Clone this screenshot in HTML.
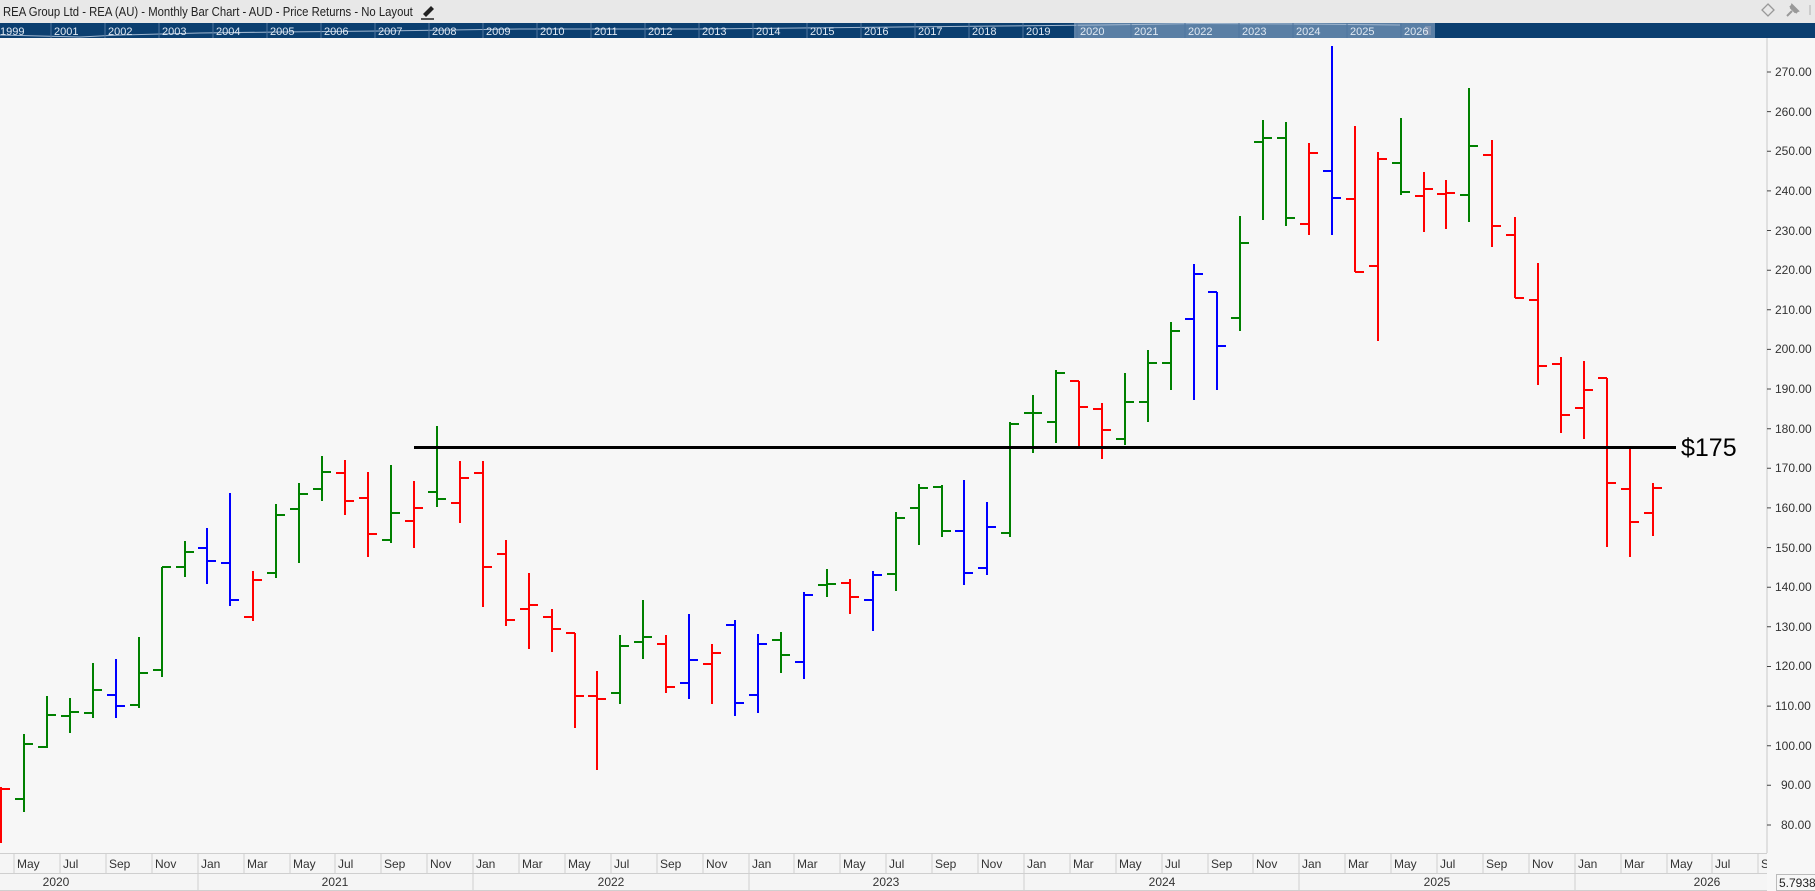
<!DOCTYPE html>
<html><head><meta charset="utf-8">
<style>
html,body{margin:0;padding:0;}
body{width:1815px;height:891px;overflow:hidden;background:#f7f7f7;font-family:"Liberation Sans",sans-serif;position:relative;}
#title{position:absolute;left:0;top:0;width:1815px;height:23px;background:#e8e8e8;}
#title span{position:absolute;left:3px;top:4px;font-size:13px;color:#222;transform:scaleX(0.87);transform-origin:0 0;white-space:nowrap;}
</style></head><body>
<div id="title"><span>REA Group Ltd - REA (AU) - Monthly Bar Chart - AUD - Price Returns - No Layout</span></div>
<svg style="position:absolute;left:0;top:0" width="1815" height="891" xmlns="http://www.w3.org/2000/svg">
<path d="M423 14 L431 6 L434 9 L426 17 Z" fill="#222"/><path d="M421 19 H434" stroke="#222" stroke-width="1.5"/>
<path d="M1768 4 L1774 10 L1768 16 L1762 10 Z" fill="none" stroke="#999" stroke-width="1.3"/>
<path d="M1787 16 L1792 11 M1790 6 L1797 13 M1792 5 L1798 11 L1795 12 L1791 8 Z" stroke="#999" stroke-width="2" fill="#999"/>
<path d="M1810 5 V15" stroke="#ccc" stroke-width="2"/>
<rect x="0" y="23" width="1815" height="15" fill="#0b3f70"/>
<rect x="1074" y="23" width="361" height="15" fill="#5a7fa5"/>
<polyline points="0,35 40,36 80,37 120,35 200,33 280,32 380,31 450,30 520,29 600,29 700,29 800,28 900,27 1000,26 1100,25 1200,23.5 1300,24 1400,25" fill="none" stroke="#9fb6cf" stroke-width="1"/>
<g stroke="#4f759e" stroke-width="1">
<path d="M51 23V38M105 23V38M159 23V38M213 23V38M267 23V38M321 23V38M375 23V38M429 23V38M483 23V38M537 23V38M591 23V38M645 23V38M699 23V38M753 23V38M807 23V38M861 23V38M915 23V38M969 23V38M1023 23V38M1077 23V38M1131 23V38M1185 23V38M1239 23V38M1293 23V38M1347 23V38M1401 23V38"/>
</g>
<path d="M1426 26V35M1428 26V35M1430 26V35" stroke="#aab" stroke-width="0.8"/>
<g font-size="11" fill="#dfe8f2" font-family="Liberation Sans, sans-serif">
<text x="0" y="35">1999</text><text x="54" y="35">2001</text><text x="108" y="35">2002</text><text x="162" y="35">2003</text><text x="216" y="35">2004</text><text x="270" y="35">2005</text><text x="324" y="35">2006</text><text x="378" y="35">2007</text><text x="432" y="35">2008</text><text x="486" y="35">2009</text><text x="540" y="35">2010</text><text x="594" y="35">2011</text><text x="648" y="35">2012</text><text x="702" y="35">2013</text><text x="756" y="35">2014</text><text x="810" y="35">2015</text><text x="864" y="35">2016</text><text x="918" y="35">2017</text><text x="972" y="35">2018</text><text x="1026" y="35">2019</text><text x="1080" y="35">2020</text><text x="1134" y="35">2021</text><text x="1188" y="35">2022</text><text x="1242" y="35">2023</text><text x="1296" y="35">2024</text><text x="1350" y="35">2025</text><text x="1404" y="35">2026</text>
</g>
<path d="M1767 38V853" stroke="#c8c8c8" stroke-width="1"/>
<g stroke="#444" stroke-width="1">
<path d="M1767 72H1771M1767 111.6H1771M1767 151.3H1771M1767 190.9H1771M1767 230.5H1771M1767 270.2H1771M1767 309.8H1771M1767 349.4H1771M1767 389H1771M1767 428.7H1771M1767 468.3H1771M1767 507.9H1771M1767 547.6H1771M1767 587.2H1771M1767 626.8H1771M1767 666.5H1771M1767 706.1H1771M1767 745.7H1771M1767 785.3H1771M1767 825H1771"/>
</g>
<g font-size="12" fill="#333" font-family="Liberation Sans, sans-serif">
<text x="1775" y="76">270.00</text><text x="1775" y="116">260.00</text><text x="1775" y="155">250.00</text><text x="1775" y="195">240.00</text><text x="1775" y="235">230.00</text><text x="1775" y="274">220.00</text><text x="1775" y="314">210.00</text><text x="1775" y="353">200.00</text><text x="1775" y="393">190.00</text><text x="1775" y="433">180.00</text><text x="1775" y="472">170.00</text><text x="1775" y="512">160.00</text><text x="1775" y="552">150.00</text><text x="1775" y="591">140.00</text><text x="1775" y="631">130.00</text><text x="1775" y="670">120.00</text><text x="1775" y="710">110.00</text><text x="1775" y="750">100.00</text><text x="1781" y="789">90.00</text><text x="1781" y="829">80.00</text>
</g>
<g fill="none" stroke-width="2">
<path stroke="#008000" d="M24 734V812M15 799H24M24 744H33M47 696V748M38 747H47M47 715H56M70 698V733M61 716H70M70 712H79M93 663V718M84 713H93M93 690H102M139 637V708M130 705H139M139 673H148M162 567V677M153 670H162M162 567H171M185 541V577M176 567H185M185 552H194M276 504V578M267 573H276M276 515H285M299 483V563M290 509H299M299 494H308M322 456V501M313 489H322M322 472H331M391 465V543M382 540H391M391 513H400M437 426V507M428 492H437M437 499H446M620 635V704M611 693H620M620 646H629M643 600V659M634 642H643M643 637H652M781 632V673M772 640H781M781 655H790M827 569V597M818 585H827M827 584H836M896 512V591M887 574H896M896 518H905M919 484V545M910 508H919M919 488H928M942 485V537M933 487H942M942 531H951M1010 422V537M1001 533H1010M1010 424H1019M1033 395V453M1024 413H1033M1033 413H1042M1056 370V443M1047 422H1056M1056 373H1065M1125 373V445M1116 439H1125M1125 402H1134M1148 350V422M1139 402H1148M1148 363H1157M1171 322V390M1162 363H1171M1171 331H1180M1240 216V331M1231 318H1240M1240 243H1249M1263 120V220M1254 142H1263M1263 138H1272M1286 122V226M1277 138H1286M1286 218H1295M1401 118V195M1392 163H1401M1401 192H1410M1469 88V222M1460 195H1469M1469 146H1478"/>
<path stroke="#ff0000" d="M1 787V843M1 789H10M253 571V621M244 617H253M253 580H262M345 460V515M336 473H345M345 501H354M368 472V557M359 498H368M368 534H377M414 481V548M405 521H414M414 508H423M460 461V523M451 503H460M460 478H469M483 461V607M474 473H483M483 567H492M506 540V626M497 554H506M506 620H515M529 573V649M520 609H529M529 605H538M552 609V652M543 617H552M552 629H561M575 633V728M566 633H575M575 696H584M597 671V770M588 696H597M597 699H606M666 635V693M657 644H666M666 687H675M712 644V704M703 664H712M712 653H721M850 579V614M841 583H850M850 597H859M1079 381V447M1070 381H1079M1079 407H1088M1102 403V459M1093 409H1102M1102 430H1111M1309 143V235M1300 224H1309M1309 153H1318M1355 126V272M1346 199H1355M1355 272H1364M1378 152V341M1369 266H1378M1378 159H1387M1424 172V232M1415 196H1424M1424 189H1433M1446 180V229M1437 194H1446M1446 193H1455M1492 140V247M1483 155H1492M1492 226H1501M1515 217V298M1506 235H1515M1515 298H1524M1538 263V385M1529 300H1538M1538 366H1547M1561 357V433M1552 364H1561M1561 415H1570M1584 361V439M1575 408H1584M1584 390H1593M1607 378V547M1598 378H1607M1607 483H1616M1630 449V557M1621 489H1630M1630 522H1639M1653 483V536M1644 513H1653M1653 488H1662"/>
<path stroke="#0000ff" d="M116 659V718M107 695H116M116 706H125M207 528V584M198 548H207M207 561H216M230 493V606M221 563H230M230 600H239M689 614V699M680 683H689M689 660H698M735 620V716M726 625H735M735 703H744M758 634V713M749 695H758M758 644H767M804 592V679M795 662H804M804 595H813M873 571V631M864 600H873M873 575H882M964 480V585M955 531H964M964 573H973M987 502V575M978 568H987M987 527H996M1194 264V400M1185 319H1194M1194 274H1203M1217 292V390M1208 292H1217M1217 346H1226M1332 46V235M1323 171H1332M1332 198H1341"/>
</g>
<path d="M414 447.5H1676" stroke="#000" stroke-width="3"/>
<text x="1681" y="456" font-size="25" fill="#000" font-family="Liberation Sans, sans-serif">$175</text>
<rect x="0" y="853" width="1767" height="38" fill="#f5f5f5"/>
<path d="M0 853.5H1767M0 873.5H1767M0 890.5H1767" stroke="#cfcfcf" stroke-width="1"/>
<g stroke="#cfcfcf" stroke-width="1">
<path d="M14 853V873M60 853V873M106 853V873M152 853V873M198 853V891M244 853V873M290 853V873M335 853V873M381 853V873M427 853V873M473 853V891M519 853V873M565 853V873M611 853V873M657 853V873M703 853V873M749 853V891M794 853V873M840 853V873M886 853V873M932 853V873M978 853V873M1024 853V891M1070 853V873M1116 853V873M1162 853V873M1208 853V873M1253 853V873M1299 853V891M1345 853V873M1391 853V873M1437 853V873M1483 853V873M1529 853V873M1575 853V891M1621 853V873M1667 853V873M1712 853V873M1758 853V873"/>
</g>
<g font-size="12" fill="#333" font-family="Liberation Sans, sans-serif">
<text x="17" y="868">May</text><text x="63" y="868">Jul</text><text x="109" y="868">Sep</text><text x="155" y="868">Nov</text><text x="201" y="868">Jan</text><text x="247" y="868">Mar</text><text x="293" y="868">May</text><text x="338" y="868">Jul</text><text x="384" y="868">Sep</text><text x="430" y="868">Nov</text><text x="476" y="868">Jan</text><text x="522" y="868">Mar</text><text x="568" y="868">May</text><text x="614" y="868">Jul</text><text x="660" y="868">Sep</text><text x="706" y="868">Nov</text><text x="752" y="868">Jan</text><text x="797" y="868">Mar</text><text x="843" y="868">May</text><text x="889" y="868">Jul</text><text x="935" y="868">Sep</text><text x="981" y="868">Nov</text><text x="1027" y="868">Jan</text><text x="1073" y="868">Mar</text><text x="1119" y="868">May</text><text x="1165" y="868">Jul</text><text x="1211" y="868">Sep</text><text x="1256" y="868">Nov</text><text x="1302" y="868">Jan</text><text x="1348" y="868">Mar</text><text x="1394" y="868">May</text><text x="1440" y="868">Jul</text><text x="1486" y="868">Sep</text><text x="1532" y="868">Nov</text><text x="1578" y="868">Jan</text><text x="1624" y="868">Mar</text><text x="1670" y="868">May</text><text x="1715" y="868">Jul</text><text x="1761" y="868">Se</text>
<text x="56" y="886" text-anchor="middle">2020</text><text x="335" y="886" text-anchor="middle">2021</text><text x="611" y="886" text-anchor="middle">2022</text><text x="886" y="886" text-anchor="middle">2023</text><text x="1162" y="886" text-anchor="middle">2024</text><text x="1437" y="886" text-anchor="middle">2025</text><text x="1707" y="886" text-anchor="middle">2026</text>
</g>
<rect x="1767" y="853" width="48" height="38" fill="#f7f7f7"/>
<rect x="1776.5" y="874.5" width="40" height="16" fill="#f7f7f7" stroke="#bbb"/>
<text x="1779" y="887" font-size="12" fill="#222" font-family="Liberation Sans, sans-serif">5.79389</text>
</svg>
</body></html>
